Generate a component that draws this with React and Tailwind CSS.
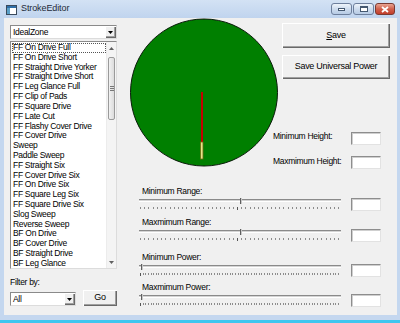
import React from "react";

const shots = [
  "FF On Drive Full",
  "FF On Drive Short",
  "FF Straight Drive Yorker",
  "FF Straight Drive Short",
  "FF Leg Glance Full",
  "FF Clip of Pads",
  "FF Square Drive",
  "FF Late Cut",
  "FF Flashy Cover Drive",
  "FF Cover Drive",
  "Sweep",
  "Paddle Sweep",
  "FF Straight Six",
  "FF Cover Drive Six",
  "FF On Drive Six",
  "FF Square Leg Six",
  "FF Square Drive Six",
  "Slog Sweep",
  "Reverse Sweep",
  "BF On Drive",
  "BF Cover Drive",
  "BF Straight Drive",
  "BF Leg Glance",
];

const btn3d =
  "bg-[#f0f0f0] shadow-[inset_1px_1px_0_#ffffff,inset_-1px_-1px_0_#696969,inset_-2px_-2px_0_#a0a0a0]";

// sunken white edit box
const TextBox = () => (
  <div className="w-[30px] h-[13px] bg-white border border-t-[#8d8d8d] border-l-[#8d8d8d] border-r-[#e2e2e2] border-b-[#e2e2e2] shadow-[inset_1px_1px_0_#cfcfcf]" />
);

const ComboBox = ({ value, width }) => (
  <div
    className={`${width} h-[14px] bg-white border border-t-[#8a8a8a] border-l-[#8a8a8a] border-r-[#dcdcdc] border-b-[#dcdcdc] flex items-center`}
  >
    <span className="flex-1 pl-[2px] leading-none">{value}</span>
    <div className={`w-[11px] h-[12px] flex items-center justify-center ${btn3d}`}>
      <svg width="5" height="3" viewBox="0 0 5 3">
        <path d="M0 0h5L2.5 3z" fill="#000" />
      </svg>
    </div>
  </div>
);

// trackbar control
const Slider = ({ pos, count, center }) => (
  <div className="relative w-[202px] h-[13px]">
    <div className="mt-[1px] h-[3px] border-t border-t-[#8a8a8a] border-b border-b-white bg-[#d4d4d4]" />
    <div className="mt-[5px] h-[3px] flex justify-between items-start px-[1px]">
      {Array.from({ length: count }).map((_, i) => (
        <div
          key={i}
          className={
            i === center
              ? "w-px h-[3px] bg-[#555]"
              : "w-px h-[2px] bg-[#8c8c8c]"
          }
        />
      ))}
    </div>
    <div
      className="absolute top-0 w-[2px] h-[6px] bg-[#5f5f5f] border-r border-r-[#c8c8c8]"
      style={{ left: pos }}
    />
  </div>
);

const SliderGroup = ({ label, pos, count, center, mt }) => (
  <div className={mt}>
    <div className="h-[10px] leading-[10px] pl-[3px]">{label}</div>
    <div className="mt-[2px] flex items-start">
      <Slider pos={pos} count={count} center={center} />
      <div className="ml-[10px]">
        <TextBox />
      </div>
    </div>
  </div>
);

const CaptionButton = ({ children, red }) => (
  <div
    className={`h-[12px] rounded-[3px] border flex items-center justify-center ${
      red
        ? "w-[20px] border-[#7a3a32] bg-gradient-to-b from-[#e8a493] via-[#d0604c] to-[#c23d2a]"
        : "w-[21px] border-[#6d7f9c] bg-gradient-to-b from-[#eef4fb] via-[#cddcee] to-[#b7cbe5]"
    }`}
  >
    {children}
  </div>
);

export default function App() {
  return (
    <div className="w-[400px] h-[323px] flex flex-col bg-[#c4d7ef] font-['Liberation_Sans',Arial,sans-serif] text-[8.5px] tracking-[-0.3px] text-black overflow-hidden">
      {/* title bar */}
      <div className="h-[18px] flex items-center bg-gradient-to-b from-[#d3e2f4] to-[#c0d4ee]">
        <svg className="ml-[6px] mt-[1px]" width="11" height="10" viewBox="0 0 11 10">
          <rect x="0.5" y="0.5" width="10" height="9" fill="#fff" stroke="#3a4a5c" />
          <rect x="1" y="1" width="9" height="2" fill="#2f6fa8" />
          <rect x="1" y="3" width="3" height="6" fill="#5aa0c8" />
        </svg>
        <span className="ml-[4px] text-[9px] tracking-[-0.1px] text-[#1e2a38]">StrokeEditor</span>
        <div className="ml-auto mr-[5px] flex gap-[1px] items-center">
          <CaptionButton>
            <div className="w-[7px] h-[3px] bg-white border border-[#445870]" />
          </CaptionButton>
          <CaptionButton>
            <div className="w-[8px] h-[6px] bg-white border border-[#445870] border-t-2" />
          </CaptionButton>
          <CaptionButton red>
            <svg width="8" height="7" viewBox="0 0 8 7">
              <path d="M1 1l6 5M7 1l-6 5" stroke="#fff" strokeWidth="1.8" />
            </svg>
          </CaptionButton>
        </div>
      </div>

      {/* client area */}
      <div className="mx-[4px] mr-[3px] h-[297px] bg-[#f0f0f0] flex">
        {/* left column */}
        <div className="ml-[6px] w-[107px] pt-[7px] flex flex-col">
          <ComboBox value="IdealZone" width="w-[107px]" />
          <div className="mt-[2px] h-[228px] bg-white border border-t-[#8a8a8a] border-l-[#8a8a8a] border-r-[#dcdcdc] border-b-[#dcdcdc] flex">
            <div className="flex-1 pt-px pl-px overflow-hidden">
              {shots.map((s, i) => (
                <div
                  key={s}
                  className={`h-[9.82px] leading-[9.82px] pl-px whitespace-nowrap ${
                    i === 0 ? "outline outline-1 outline-dotted outline-[#555] -outline-offset-1" : ""
                  }`}
                >
                  {s}
                </div>
              ))}
            </div>
            {/* scrollbar */}
            <div className="w-[10px] flex flex-col bg-[#f4f4f4] border-l border-l-[#ececec]">
              <div className="h-[12px] flex items-center justify-center">
                <svg width="5" height="3" viewBox="0 0 5 3">
                  <path d="M0 3h5L2.5 0z" fill="#606060" />
                </svg>
              </div>
              <div className="mt-[3px] h-[63px] mx-[1px] rounded-[2px] border border-[#9a9a9a] bg-gradient-to-r from-[#f2f2f2] to-[#dcdcdc] flex flex-col items-center justify-center gap-px">
                <div className="w-[4px] h-px bg-[#777]" />
                <div className="w-[4px] h-px bg-[#777]" />
                <div className="w-[4px] h-px bg-[#777]" />
              </div>
              <div className="mt-auto h-[12px] flex items-center justify-center">
                <svg width="5" height="3" viewBox="0 0 5 3">
                  <path d="M0 0h5L2.5 3z" fill="#606060" />
                </svg>
              </div>
            </div>
          </div>
          <div className="mt-[8px] h-[10px] leading-[10px]">Filter by:</div>
          <div className="mt-[3px] flex items-start">
            <div className="mt-[2px]">
              <ComboBox value="All" width="w-[66px]" />
            </div>
            <div className={`ml-[7px] w-[34px] h-[16px] flex items-center justify-center text-[9px] ${btn3d}`}>
              Go
            </div>
          </div>
        </div>

        {/* right region */}
        <div className="ml-[13px] flex flex-col">
          <div className="flex">
            <svg width="148" height="149" viewBox="0 0 148 149">
              <circle cx="74" cy="74.5" r="73.5" fill="#007f00" stroke="#0a1a0a" strokeWidth="1" />
              <rect x="71" y="74" width="2" height="50" fill="#c80000" />
              <rect x="70.5" y="124" width="2.5" height="17" fill="#e8e48a" stroke="#6f6a10" strokeWidth="0.8" />
            </svg>
            <div className="flex flex-col">
              <div className={`ml-[4px] mt-[5px] w-[108px] h-[25px] flex items-center justify-center text-[9px] ${btn3d}`}>
                <span>
                  <span className="underline">S</span>ave
                </span>
              </div>
              <div className={`ml-[4px] mt-[7px] w-[108px] h-[24px] flex items-center justify-center text-[9px] ${btn3d}`}>
                Save Universal Power
              </div>
              <div className="-ml-[5px] mt-[53px] flex items-start">
                <div className="w-[78px] h-[10px] leading-[10px] -mt-[1px]">Minimum Height:</div>
                <TextBox />
              </div>
              <div className="-ml-[5px] mt-[11px] flex items-start">
                <div className="w-[78px] h-[10px] leading-[10px]">Maxmimum Height:</div>
                <TextBox />
              </div>
            </div>
          </div>

          <div className="ml-[9px] mt-[17px]">
            <SliderGroup label="Minimum Range:" pos={101} count={48} center={23} mt="" />
            <SliderGroup label="Maxmimum Range:" pos={101} count={48} center={23} mt="mt-[6px]" />
            <SliderGroup label="Minimum Power:" pos={2} count={76} center={0} mt="mt-[10px]" />
            <SliderGroup label="Maxmimum Power:" pos={2} count={76} center={0} mt="mt-[5px]" />
          </div>
        </div>
      </div>

      {/* bottom frame */}
      <div className="mt-auto h-[5px]" />
      <div className="h-[3px] bg-[#3fc6ef]" />
    </div>
  );
}
